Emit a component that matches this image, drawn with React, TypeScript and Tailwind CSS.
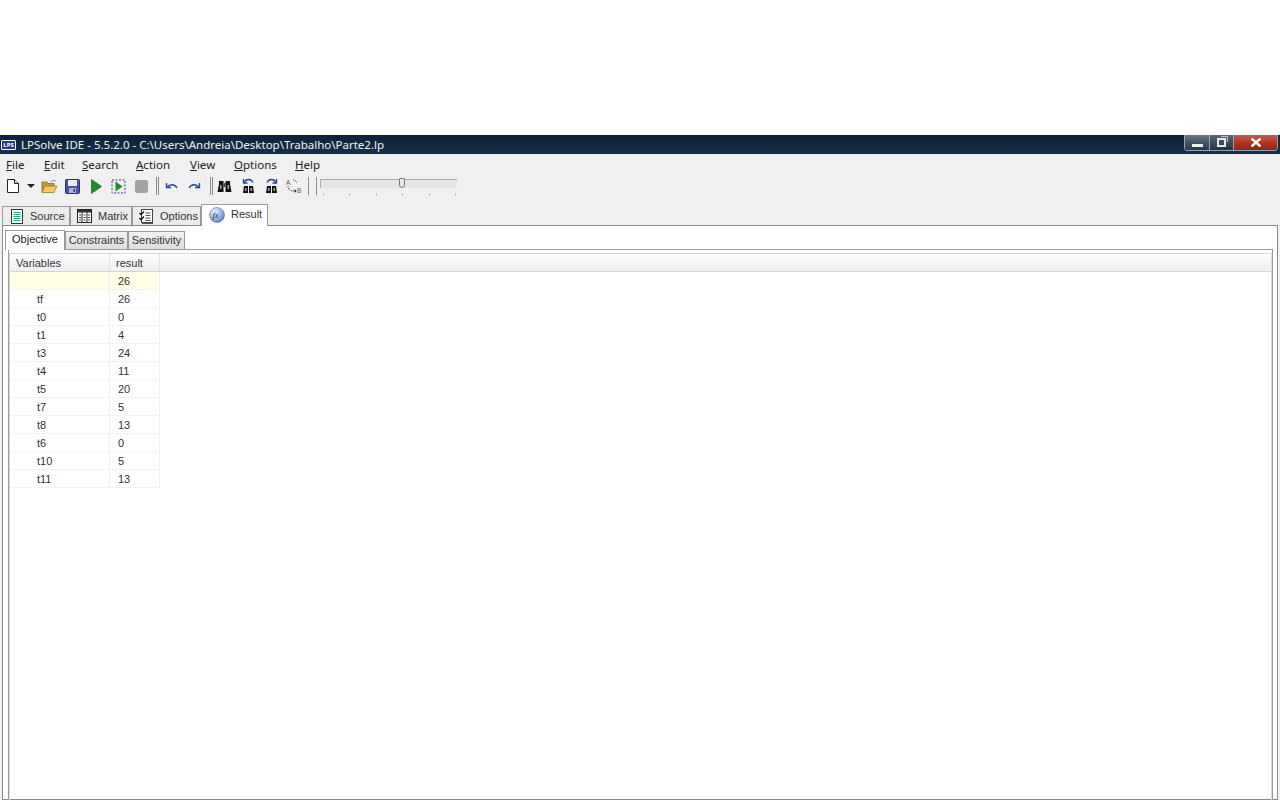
import React from "react";

const UI = "font-['Liberation_Sans',Arial,sans-serif] text-[11px]";

const IconNew = () => (
  <svg width="14" height="16" viewBox="0 0 14 16"><path d="M1.5 1.5h7l4 4v9h-11z" fill="#fff" stroke="#222" /><path d="M8.5 1.5v4h4" fill="#ddd" stroke="#222" /></svg>
);
const IconOpen = () => (
  <svg width="17" height="15" viewBox="0 0 17 15"><path d="M1 3h5l1 1.5h6V7H4L1 13z" fill="#c99a3a" stroke="#8a6a20" strokeWidth=".8" /><path d="M1 13.5 4 7h12l-3 6.5z" fill="#f2c862" stroke="#a37c22" strokeWidth=".8" /><path d="M10 3c1-1.6 3-2 5-1" fill="none" stroke="#7a8fb0" /></svg>
);
const IconSave = () => (
  <svg width="15" height="15" viewBox="0 0 15 15"><rect x=".5" y=".5" width="14" height="14" rx="1" fill="#4a52a8" stroke="#2a2f70" /><rect x="3" y="1" width="9" height="6" fill="#e8ecf6" /><rect x="4" y="9" width="7" height="5" fill="#aab3d8" /><rect x="8.5" y="10" width="1.5" height="3" fill="#2a2f70" /></svg>
);
const IconPlay = () => (
  <svg width="11" height="15" viewBox="0 0 11 15"><path d="M.5.5 10.5 7.5.5 14.5z" fill="#1f8a2e" stroke="#14661f" strokeWidth=".7" /></svg>
);
const IconStep = () => (
  <svg width="15" height="15" viewBox="0 0 15 15"><rect x="1" y="1" width="13" height="13" fill="none" stroke="#27458c" strokeDasharray="2 1.5" /><path d="M4.5 2.5 11.5 7.5 4.5 12.5z" fill="#1f8a2e" /></svg>
);
const IconStop = () => <div className="h-[13px] w-[13px] rounded-[2px] bg-[#a3a3a3]" />;
const Undo = ({ flip }: { flip?: boolean }) => (
  <svg width="13" height="9" viewBox="0 0 13 9" style={flip ? { transform: "scaleX(-1)" } : undefined}><path d="M1.5 1v4.500H6" fill="none" stroke="#27458c" strokeWidth="1.4" /><path d="M2 5.500C4.500 2 9.500 1.500 12 6" fill="none" stroke="#27458c" strokeWidth="1.4" /></svg>
);
const Binoc = () => (
  <svg width="15" height="14" viewBox="0 0 15 14">
    <path d="M.5 13 2 5V2h4.500v11zM8.500 13V2H13v3l1.500 8z" fill="#111" />
    <rect x="6.500" y="4" width="2" height="4" fill="#444" />
    <rect x="3" y="6" width="1.500" height="4" fill="#aaa" />
    <rect x="10.500" y="6" width="1.500" height="4" fill="#aaa" />
  </svg>
);
const BinocArrow = ({ dir }: { dir: "l" | "r" }) => (
  <svg width="15" height="16" viewBox="0 0 15 16">
    <path d={dir === "l" ? "M3 4.500C5 .5 10 .5 12 4.500M2.500 1v4H6.500" : "M12 4.500C10 .5 5 .5 3 4.500M12.500 1v4H8.500"} fill="none" stroke="#27458c" strokeWidth="1.300" />
    <path d="M2 15 3 8h4v7zM8 15V8h4l1 7z" fill="#111" />
    <rect x="4" y="10" width="1.500" height="3" fill="#aaa" />
    <rect x="9.500" y="10" width="1.500" height="3" fill="#aaa" />
  </svg>
);
const IconAB = () => (
  <svg width="17" height="16" viewBox="0 0 17 16"><text x="0" y="6.500" fontSize="6.500" fill="#555" fontFamily="Liberation Sans">A</text><text x="11" y="15" fontSize="6.500" fill="#555" fontFamily="Liberation Sans">B</text><path d="M7 2c3 0 3 1 3.500 3" fill="none" stroke="#27458c" strokeDasharray="1 1" /><path d="M2 8c0 3 1 5 7 5" fill="none" stroke="#333" strokeDasharray="1 1" /><path d="m8.500 11 2 2-2 2z" fill="#222" /></svg>
);
const IconDoc = () => (
  <svg width="14" height="15" viewBox="0 0 14 15"><rect x="1.500" y=".5" width="11" height="14" fill="#fff" stroke="#333" /><path d="M3.500 3.500h7M3.500 5.500h7M3.500 7.500h7M3.500 9.500h7M3.500 11.500h7" stroke="#27a58f" /></svg>
);
const IconMatrix = () => (
  <svg width="15" height="14" viewBox="0 0 15 14"><rect x=".5" y=".5" width="14" height="13" fill="#fff" stroke="#222" /><rect x="1" y="1" width="13" height="2.500" fill="#333" /><path d="M5 3v10M10 3v10" stroke="#222" /><path d="M2 6h2M2 8.500h2M2 11h2M6.500 6h2M6.500 8.500h2M6.500 11h2M11 6h2M11 8.500h2M11 11h2" stroke="#444" /></svg>
);
const IconOptions = () => (
  <svg width="15" height="15" viewBox="0 0 15 15"><rect x="2.500" y=".5" width="11" height="13" fill="#fff" stroke="#444" /><path d="m.5 4 1.500 1.500L5 2.500M.5 9 2 10.500 5 7.500" fill="none" stroke="#111" strokeWidth="1.300" /><path d="M6.500 4h5M6.500 6.500h5M6.500 9h5M6.500 11.500h5" stroke="#555" /><path d="M3 14.500h11" stroke="#555" /></svg>
);
const IconFx = () => (
  <svg width="16" height="16" viewBox="0 0 16 16"><defs><radialGradient id="fxg" cx=".35" cy=".3" r=".85"><stop offset="0" stopColor="#f2f6fc" /><stop offset=".6" stopColor="#8cabd8" /><stop offset="1" stopColor="#4069ac" /></radialGradient></defs><circle cx="8" cy="8" r="7.500" fill="url(#fxg)" stroke="#4d70a8" strokeWidth=".6" /><text x="3.500" y="11" fontSize="8.500" fontStyle="italic" fill="#1d2c54" fontFamily="Liberation Serif">fx</text></svg>
);

const Menu = ({ u, rest, w }: { u: string; rest: string; w: string }) => (
  <span className={`text-[11.5px] leading-[19px] text-[#222] ${w}`}><span className="underline">{u}</span>{rest}</span>
);

const MainTab = ({ icon, label, w, pl }: { icon: React.ReactNode; label: string; w: string; pl: string }) => (
  <div className={`flex h-[19px] items-center gap-[6px] border border-b-0 border-[#9a9a9a] bg-[#ececec] text-[#333] ${pl} ${w}`}><span className="flex shrink-0">{icon}</span><span>{label}</span></div>
);

const SubTab = ({ label, w }: { label: string; w: string }) => (
  <div className={`flex h-[18px] items-center justify-center border border-b-0 border-[#9a9a9a] bg-gradient-to-b from-[#f2f2f2] to-[#dddddd] text-[#333] ${w}`}>{label}</div>
);

const rows: [string, string][] = [["", "26"], ["tf", "26"], ["t0", "0"], ["t1", "4"], ["t3", "24"], ["t4", "11"], ["t5", "20"], ["t7", "5"], ["t8", "13"], ["t6", "0"], ["t10", "5"], ["t11", "13"]];
const ticks = [0, 1, 2, 3, 4, 5];

export default function App() {
  return (
    <div className="flex h-[800px] w-[1280px] flex-col overflow-hidden bg-white font-['Noto_Sans','Open_Sans',sans-serif]">
      <div className="h-[135px] shrink-0" />
      <div className="relative flex h-[19px] shrink-0 items-center bg-gradient-to-b from-[#0d2136] to-[#16304a] pl-[1px] text-[11.5px] text-[#f2f2f2]">
        <div className="flex h-[10px] w-[15px] items-center justify-center rounded-[1px] border border-white bg-[#243a8c] text-[6px] font-bold leading-none text-white">LPS</div>
        <span className="ml-[5px]">LPSolve IDE - 5.5.2.0 - C:\Users\Andreia\Desktop\Trabalho\Parte2.lp</span>
        <div className="absolute right-[2px] top-0 flex h-[16px] w-[94px] overflow-hidden rounded-b-[4px] border border-t-0 border-[#97a3ae]">
          <div className="flex w-[25px] items-center justify-center border-r border-[#97a3ae] bg-gradient-to-b from-[#6b7680] to-[#26384a] pt-[6px]"><div className="h-[3px] w-[11px] bg-[#f0f0f0]" /></div>
          <div className="flex w-[24px] items-center justify-center border-r border-[#97a3ae] bg-gradient-to-b from-[#5c6a77] to-[#1f3245]">
            <div className="relative h-[9px] w-[9px] border-2 border-[#e8e8e8]"><div className="absolute -right-[4px] -top-[4px] h-[6px] w-[7px] border-r border-t border-[#b8c0c8]" /></div>
          </div>
          <div className="flex flex-1 items-center justify-center bg-gradient-to-b from-[#a8625a] via-[#bd3018] to-[#7e2a1e]">
            <svg width="12" height="9" viewBox="0 0 12 9"><path d="M1.500.5 10.500 8.500M10.500.5 1.500 8.500" stroke="#fff" strokeWidth="2.400" /></svg>
          </div>
        </div>
      </div>
      <div className="h-px shrink-0 bg-[#e8e8e8]" />
      <div className="flex min-h-0 flex-1 flex-col bg-[#f0f0f0]">
        <div className="flex h-[20px] shrink-0 pl-[6px]">
          <Menu u="F" rest="ile" w="w-[38px]" />
          <Menu u="E" rest="dit" w="w-[38px]" />
          <Menu u="S" rest="earch" w="w-[54px]" />
          <Menu u="A" rest="ction" w="w-[54px]" />
          <Menu u="V" rest="iew" w="w-[44px]" />
          <Menu u="O" rest="ptions" w="w-[61px]" />
          <Menu u="H" rest="elp" w="w-[40px]" />
        </div>
        <div className="flex h-[22px] shrink-0 items-center pl-[6px]">
          <IconNew />
          <div className="ml-[7px] h-0 w-0 border-x-[4px] border-t-[4px] border-x-transparent border-t-[#222]" />
          <div className="ml-[6px] flex"><IconOpen /></div>
          <div className="ml-[7px] flex"><IconSave /></div>
          <div className="ml-[11px] flex"><IconPlay /></div>
          <div className="ml-[9px] flex"><IconStep /></div>
          <div className="ml-[9px] flex"><IconStop /></div>
          <div className="ml-[8px] h-[18px] w-[3px] border-x border-[#8a8a8a]" />
          <div className="ml-[6px] flex"><Undo /></div>
          <div className="ml-[10px] flex"><Undo flip /></div>
          <div className="ml-[9px] h-[18px] w-[3px] border-x border-[#8a8a8a]" />
          <div className="ml-[4px] flex"><Binoc /></div>
          <div className="ml-[9px] flex"><BinocArrow dir="l" /></div>
          <div className="ml-[8px] flex"><BinocArrow dir="r" /></div>
          <div className="ml-[7px] flex"><IconAB /></div>
          <div className="ml-[5px] h-[18px] w-px bg-[#8a8a8a]" />
          <div className="ml-[7px] h-[18px] w-px bg-[#8a8a8a]" />
          <div className="relative ml-[3px] h-[22px] w-[137px]">
            <div className="absolute left-0 right-0 top-[4px] h-[9px] border-l border-t border-[#a8aaa8] bg-[#e4e8e4]" />
            <div className="absolute left-[79px] top-[3px] h-[10px] w-[6px] rounded-b-[3px] rounded-t-[1px] border border-[#777] bg-[#e8e8e8]" />
            <div className="absolute left-[3px] right-[1px] top-[18px] flex justify-between">
              {ticks.map((t) => <div key={t} className="h-[3px] w-px bg-[#bdbdbd]" />)}
            </div>
          </div>
        </div>
        <div className={`flex h-[28px] shrink-0 items-end pl-[2px] ${UI}`}>
          <MainTab icon={<IconDoc />} label="Source" w="w-[68px]" pl="pl-[7px]" />
          <MainTab icon={<IconMatrix />} label="Matrix" w="w-[62px]" pl="pl-[6px]" />
          <MainTab icon={<IconOptions />} label="Options" w="w-[69px]" pl="pl-[6px]" />
          <div className="z-10 -mb-px flex h-[22px] w-[67px] items-center gap-[6px] self-end border border-b-0 border-[#9a9a9a] bg-white pb-[2px] pl-[7px] text-[#333]"><IconFx /><span>Result</span></div>
        </div>
        <div className={`mx-[2px] flex min-h-0 flex-1 flex-col border border-[#8a8a8a] bg-white pl-[5px] pr-[4px] pt-[4px] ${UI}`}>
          <div className="-ml-[3px] flex h-[19px] shrink-0 items-end">
            <div className="z-10 -mb-px flex h-[20px] w-[60px] items-center justify-center border border-b-0 border-[#9a9a9a] bg-white pb-[2px] text-[#222]">Objective</div>
            <SubTab label="Constraints" w="w-[63px]" />
            <SubTab label="Sensitivity" w="w-[57px]" />
          </div>
          <div className="h-[700px] shrink-0 border border-[#9a9a9a] pt-[3px]">
            <div className="h-full border border-[#d8d8d8]">
              <div className="flex h-[18px] border-b border-[#d5d5d5] bg-gradient-to-b from-[#fdfdfd] to-[#eef0f2] leading-[19px] text-[#333]">
                <div className="w-[100px] border-r border-[#e2e2e2] pl-[6px]">Variables</div>
                <div className="w-[50px] border-r border-[#e2e2e2] pl-[6px]">result</div>
              </div>
              {rows.map(([name, value], i) => (
                <div key={i} className={`flex h-[18px] w-[150px] border-b border-[#f3f3f3] leading-[19px] text-[#333] ${i === 0 ? "bg-[#ffffe6]" : ""}`}>
                  <div className="w-[100px] border-r border-[#f0f0f0] pl-[27px]">{name}</div>
                  <div className="w-[50px] border-r border-[#f0f0f0] pl-[8px]">{value}</div>
                </div>
              ))}
            </div>
          </div>
        </div>
      </div>
    </div>
  );
}
